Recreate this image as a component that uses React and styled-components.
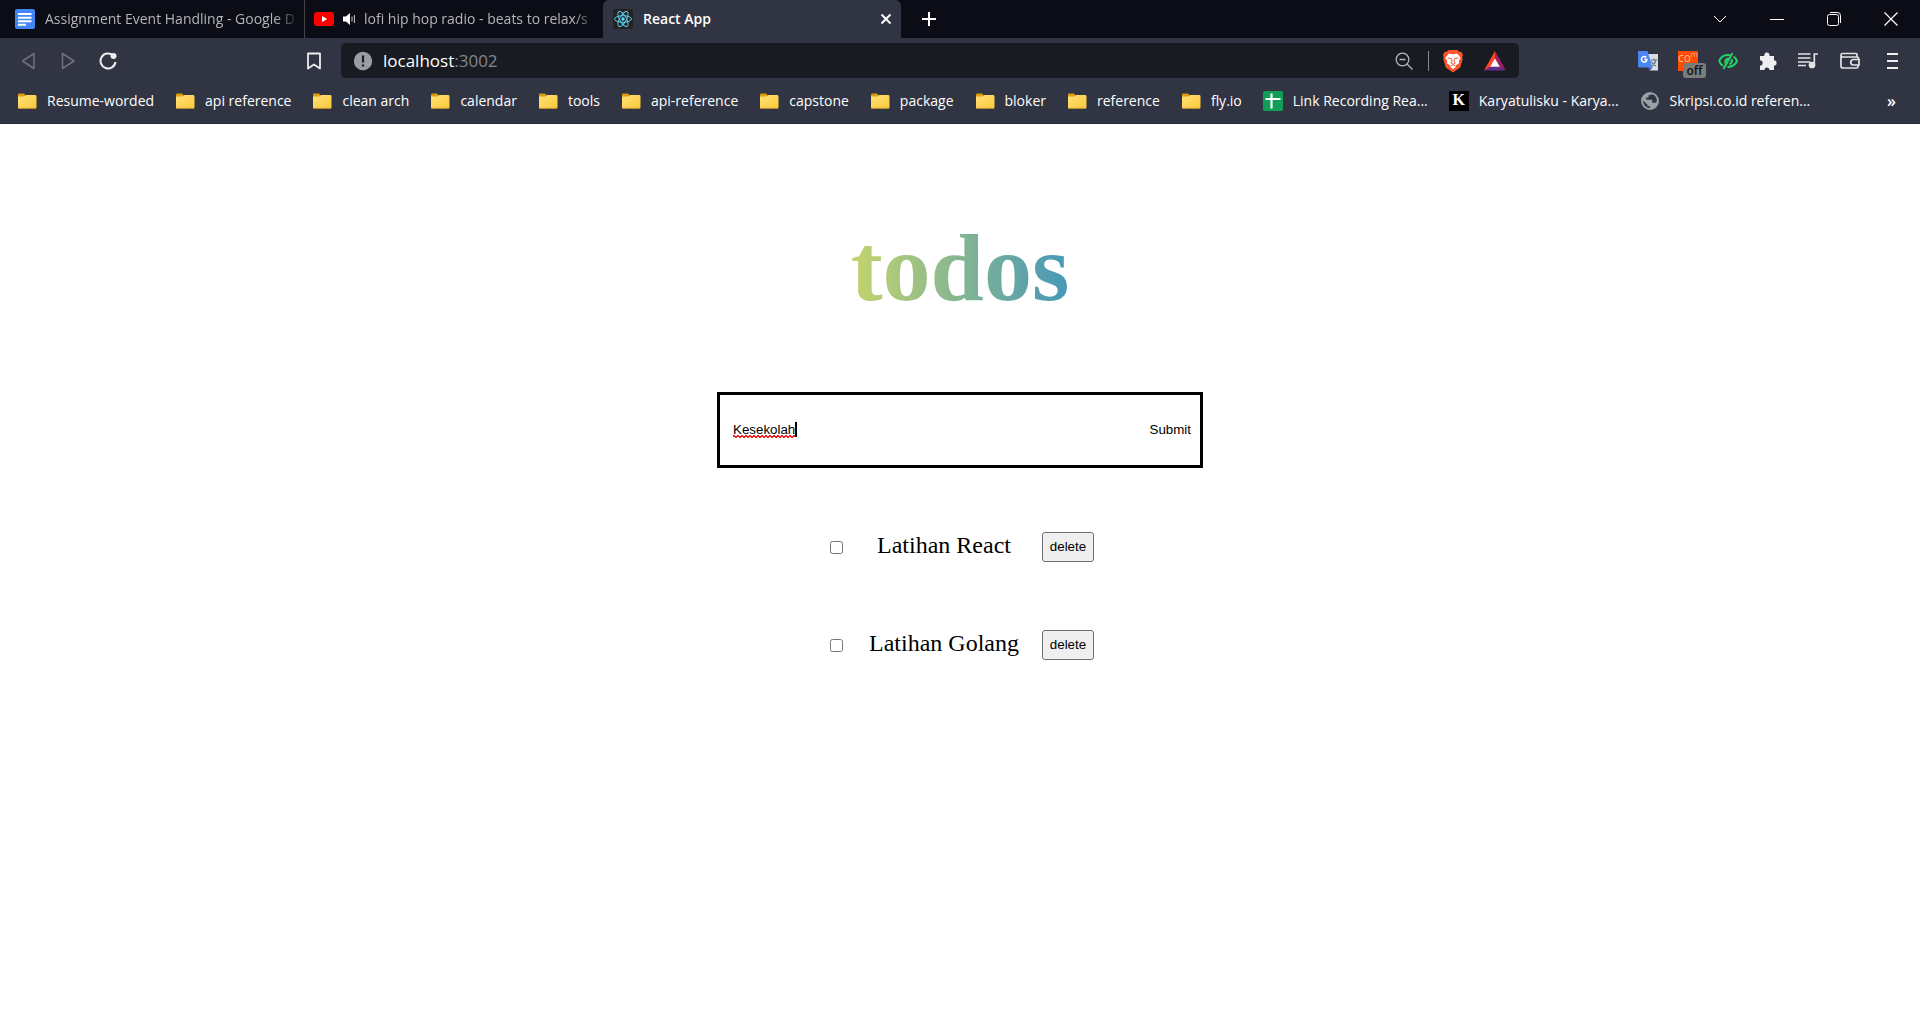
import React, { useState } from "react";
import styled, { createGlobalStyle, css } from "styled-components";

const colors = {
  strip: "#0b0c15",
  chrome: "#313442",
  address: "#181b22",
};

const GlobalStyle = createGlobalStyle`
  *, *::before, *::after { box-sizing: border-box; }
  body { margin: 0; background: #fff; }
`;

const Browser = styled.div`
  font-family: "Open Sans", "Noto Sans", sans-serif;
  background: ${colors.chrome};
  color: #fff;
`;

const IconButton = styled.button`
  display: inline-flex;
  align-items: center;
  justify-content: center;
  flex: none;
  width: ${(p) => p.$width || 40}px;
  height: 35px;
  padding: 0;
  border: 0;
  background: none;
  color: ${(p) => p.$color || "#fff"};
`;

const TabStrip = styled.div`
  display: flex;
  align-items: center;
  height: 38px;
  background: ${colors.strip};
`;

const Tab = styled.div`
  display: flex;
  align-items: center;
  gap: 9px;
  flex: 0 1 298px;
  min-width: 0;
  height: 38px;
  padding: 0 5px 0 9px;
  color: #b4b5b9;
  ${(p) =>
    p.$first &&
    css`
      gap: 10px;
      flex-basis: 305px;
      padding-left: 15px;
      border-right: 1px solid #45454a;
    `}
  ${(p) =>
    p.$active &&
    css`
      gap: 10px;
      padding-left: 10px;
      padding-right: 0;
      background: ${colors.chrome};
      color: #fff;
      font-weight: 600;
      border-radius: 6px 6px 0 0;
    `}
`;

const TabTitle = styled.span`
  flex: 1;
  min-width: 0;
  overflow: hidden;
  white-space: nowrap;
  font-size: 14px;
  line-height: 24px;
  ${(p) =>
    p.$fade &&
    css`
      mask-image: linear-gradient(to right, #000 calc(100% - 24px), transparent);
    `}
`;

const WindowControls = styled.div`
  display: flex;
  margin-left: auto;
`;

const Toolbar = styled.div`
  display: flex;
  align-items: center;
  height: 45px;
  padding-left: 8px;
  padding-right: 8px;
`;

const BookmarkSlot = styled.div`
  display: flex;
  margin-left: 166px;
  margin-right: 7px;
`;

const AddressBar = styled.div`
  display: flex;
  align-items: center;
  flex: 1;
  height: 35px;
  padding-left: 12px;
  padding-right: 2px;
  border-radius: 5px;
  background: ${colors.address};
`;

const Url = styled.div`
  flex: 1;
  margin-left: 10px;
  font-size: 17px;
  line-height: 24px;
`;

const Port = styled.span`
  color: #85878c;
`;

const Divider = styled.span`
  width: 1px;
  height: 20px;
  margin: 0 4px;
  background: #85878c;
`;

const Extensions = styled.div`
  display: flex;
  align-items: center;
  margin-left: 109px;
`;

const BookmarksBar = styled.nav`
  display: flex;
  align-items: center;
  gap: 21px;
  height: 41px;
  padding: 0 18px 5px 17px;
  border-bottom: 1px solid #292b36;
`;

const Bookmark = styled.a`
  display: flex;
  align-items: center;
  gap: 10px;
  flex: none;
  color: #fff;
  text-decoration: none;
  font-size: 14px;
  line-height: 24px;
`;

const More = styled.button`
  margin-left: auto;
  padding: 0 6px;
  border: 0;
  background: none;
  color: #fff;
  font: 600 16px/24px "Open Sans", sans-serif;
`;

const Page = styled.main`
  display: flex;
  flex-direction: column;
  align-items: center;
  padding: 89px 16px;
  background: #fff;
  color: #000;
`;

const Title = styled.h1`
  margin: 0;
  font: bold 96px/110px "Liberation Serif", "Times New Roman", serif;
  background: linear-gradient(to right, #c4d46c, #4697b8);
  background-clip: text;
  -webkit-background-clip: text;
  color: transparent;
`;

const Form = styled.form`
  display: flex;
  align-items: center;
  width: 100%;
  max-width: 486px;
  height: 76px;
  margin-top: 69px;
  padding: 0 9px 2px 13px;
  border: 3px solid #000;
`;

const Field = styled.div`
  display: flex;
  align-items: center;
  flex: 1;
  min-width: 0;
`;

const TextInput = styled.input`
  field-sizing: content;
  padding: 1px 0;
  border: 0;
  outline: 0;
  font-family: "Liberation Sans", Arial, sans-serif;
  color: #000;
  background:
    linear-gradient(45deg, transparent 40%, #e22 40% 62%, transparent 62%) 0 100% / 4px 3px repeat-x,
    linear-gradient(-45deg, transparent 40%, #e22 40% 62%, transparent 62%) 2px 100% / 4px 3px repeat-x;
`;

const Caret = styled.span`
  width: 2px;
  height: 15px;
  background: #000;
`;

const Submit = styled.button`
  padding: 0;
  border: 0;
  background: none;
  color: #000;
  font-family: "Liberation Sans", Arial, sans-serif;
`;

const TodoList = styled.ul`
  display: grid;
  gap: 68px;
  margin: 64px 0 0;
  padding: 0 0 0 4px;
  list-style: none;
`;

const TodoItem = styled.li`
  display: grid;
  grid-template-columns: 13px 199px 52px;
  align-items: center;
  height: 30px;
`;

const Check = styled.input`
  width: 13px;
  height: 13px;
  margin: 0;
`;

const TodoLabel = styled.label`
  padding-left: 3px;
  padding-bottom: 3px;
  text-align: center;
  font: 24px/27px "Liberation Serif", "Times New Roman", serif;
`;

const Delete = styled.button`
  height: 30px;
  padding: 0 0 1px;
  border: 1px solid #6f6f6f;
  border-radius: 3px;
  background: #efefef;
  color: #000;
  font-family: "Liberation Sans", Arial, sans-serif;
`;

const Stroke = ({ size = 18, box = "0 0 18 18", width = 1.5, children }) => (
  <svg width={size} height={size} viewBox={box} fill="none" stroke="currentColor" strokeWidth={width} aria-hidden="true">
    {children}
  </svg>
);

const DocsIcon = () => (
  <svg width="20" height="20" viewBox="0 0 20 20" aria-hidden="true">
    <rect width="20" height="20" rx="2" fill="#4285f4" />
    <path d="M3 5h13.500M3 8.700h13.500M3 12.200h13.500M3 15.700h8" stroke="#fff" strokeWidth="1.900" />
  </svg>
);

const YoutubeIcon = () => (
  <svg width="20" height="20" viewBox="0 0 20 20" aria-hidden="true">
    <rect y="3" width="20" height="14" rx="3" fill="#f00" />
    <path d="M8 7l5.200 3L8 13z" fill="#fff" />
  </svg>
);

const SpeakerIcon = () => (
  <svg width="12" height="14" viewBox="0 0 12 14" aria-hidden="true">
    <path d="M0 4.500h3L7 1v12L3 9.500H0z" fill="#fff" />
    <path d="M9 4.500v5M11.400 3v8" stroke="#ccc" strokeWidth="1" />
  </svg>
);

const ReactIcon = () => (
  <svg width="20" height="20" viewBox="0 0 20 20" aria-hidden="true">
    <rect width="20" height="20" rx="2" fill="#222" />
    <g fill="none" stroke="#61dafb" strokeWidth="0.900">
      <ellipse cx="10" cy="10" rx="8.500" ry="3.300" />
      <ellipse cx="10" cy="10" rx="8.500" ry="3.300" transform="rotate(60 10 10)" />
      <ellipse cx="10" cy="10" rx="8.500" ry="3.300" transform="rotate(120 10 10)" />
    </g>
    <circle cx="10" cy="10" r="1.700" fill="#61dafb" />
  </svg>
);

const FolderIcon = () => (
  <svg width="20" height="16" viewBox="0 0 20 16" aria-hidden="true">
    <defs>
      <linearGradient id="folder" x1="0" y1="0" x2="1" y2="1">
        <stop offset="0" stopColor="#ffe07a" />
        <stop offset="1" stopColor="#fac936" />
      </linearGradient>
    </defs>
    <path d="M1 1.500Q1 .5 2 .5h5l1.500 1.500v3H1z" fill="#dc9c0c" />
    <path d="M1 3.500h6.500L9 2h9q1.500 0 1.500 1.300v11q0 1.200-1 1.200H2q-1 0-1-1z" fill="url(#folder)" />
    <path d="M1.300 15.300h17.700" stroke="#c99a30" strokeWidth=".8" />
  </svg>
);

const SheetIcon = () => (
  <svg width="20" height="20" viewBox="0 0 20 20" aria-hidden="true">
    <rect width="20" height="20" rx="1.500" fill="#0f9d58" />
    <path d="M2.500 8h15M8.500 2.500v15" stroke="#fff" strokeWidth="2.200" />
  </svg>
);

const LetterTile = styled.span`
  width: 20px;
  height: 20px;
  background: #000;
  color: #fff;
  text-align: center;
  font: bold 16px/18px "Liberation Serif", serif;
`;

const GlobeIcon = () => (
  <svg width="20" height="20" viewBox="0 0 20 20" aria-hidden="true">
    <circle cx="10" cy="10" r="9" fill="#9aa0a6" />
    <path d="M12 3.200Q10.500 4 8.500 4.200V6.500H6.200v2.300h6v3h3.300l1.300-1.300A7 7 0 0 0 12 3.200zM3 9.500l4.500 4.200v1.500h2.500v2A7.200 7.200 0 0 1 3 9.500z" fill="#313442" />
  </svg>
);

const BraveIcon = () => (
  <svg width="22" height="24" viewBox="0 0 22 24" aria-hidden="true">
    <path d="M6.500 1h9l2 2 1.800-.2L21 6l-.7 2 .4 2-2.500 8.500L11 23.500 3.800 18.500 1.300 10l.4-2L1 6l1.700-3.200 1.800.2z" fill="#fb542b" />
    <path d="M7 4.500l4 .8 4-.8 3.700 4.200-1.900 3.300.3 2.200-3.300 2.300v1.500L11 20l-2.800-2v-1.500L4.900 14.200l.3-2.200-1.900-3.300z" fill="#fff" />
    <path d="M5.500 9l3.800.5M16.500 9l-3.800.5M9.500 9.500l.5 3-1.200 1.500L11 15.300l2.200-1.300-1.200-1.500.5-3M8.500 17.200l2.500-1.600 2.500 1.600" stroke="#fb542b" fill="none" strokeWidth="1" />
  </svg>
);

const BatIcon = () => (
  <svg width="22" height="20" viewBox="0 0 22 20" aria-hidden="true">
    <path d="M11 0L0 19.500 7 15.500 11 8z" fill="#ff4724" />
    <path d="M11 0l11 19.500-7-4L11 8z" fill="#9e1f63" />
    <path d="M0 19.500h22l-7-4H7z" fill="#662d91" />
    <path d="M11 7.500l4.800 8.300H6.200z" fill="#fff" />
  </svg>
);

const TranslateIcon = () => (
  <svg width="20" height="20" viewBox="0 0 20 20" aria-hidden="true">
    <path d="M8 3h12v16.500h-8z" fill="#d9dde3" />
    <path d="M12.500 9h7M16 7.500V9M18 9q-1 4-4 6M13.500 10.500q1.500 3 4.500 4.500" stroke="#607988" fill="none" strokeWidth="1.200" />
    <path d="M0 0h9.500l5 16.500H1.200Q0 16.500 0 15z" fill="#4a86f0" />
    <path d="M10 16.500h4.500L11.500 20z" fill="#3657c9" />
    <path d="M8.300 6.500A2.800 2.800 0 1 0 9 8.500H6.300" stroke="#fff" fill="none" strokeWidth="1.400" />
  </svg>
);

const ComTile = styled.span`
  position: relative;
  width: 20px;
  height: 20px;
  background: #ff4b00;
  color: #ffb894;
  text-align: left;
  font: 12px/14px "Open Sans", sans-serif;
`;

const ComSup = styled.span`
  position: absolute;
  top: 0;
  right: 0;
  font-size: 8px;
  line-height: 6px;
`;

const OffBadge = styled.span`
  position: absolute;
  left: 5px;
  top: 12px;
  width: 23px;
  height: 15px;
  border-radius: 3px;
  background: #7b7b7b;
  color: #111;
  text-align: center;
  font: 600 12px/15px "Open Sans", sans-serif;
`;

const EyeIcon = () => (
  <svg width="20" height="18" viewBox="0 0 20 18" fill="none" stroke="#25d366" strokeWidth="2" aria-hidden="true">
    <path d="M12 3.200Q4 2 1.200 9q1.300 3.500 4 5M15.500 4.500Q18 6 19 9q-2.500 6-9.500 6" />
    <path d="M14.500 1L5.500 17" />
    <path d="M10.500 6Q6 6 7 11.500z" fill="#25d366" strokeWidth="1" />
    <path d="M13.800 7Q14.500 10.500 11.500 12.500" />
  </svg>
);

const PuzzleIcon = () => (
  <svg width="20" height="20" viewBox="0 0 20 20" aria-hidden="true">
    <path d="M2 5h4.300a2.700 2.700 0 1 1 5.200 0H16v4.300a2.600 2.600 0 1 1 0 5.200V19h-4.500a2.500 2.500 0 0 0-5 0H2v-4.500a2.600 2.600 0 0 0 0-5.200z" fill="#eee" />
  </svg>
);

const PlaylistIcon = () => (
  <Stroke size={20} box="0 0 20 20" width={1.7}>
    <path d="M0 3h12.500M0 7h12.500M0 11h12.500M0 14.500h8M20 3h-3.700v11" />
    <circle cx="14" cy="14" r="2.500" fill="currentColor" />
  </Stroke>
);

const WalletIcon = () => (
  <Stroke size={20} box="0 0 20 20" width={1.7}>
    <path d="M17 6V3.500q0-1-1-1H2.500Q1 2.500 1 4v11q0 2 2 2h13.500q1.500 0 1.500-1.500V14M1 4.500Q1 6 3 6h14q1.500 0 1.500 1.500V9" />
    <path d="M19 8.500h-5.500a2.700 2.700 0 0 0 0 5.500H19z" />
  </Stroke>
);

const bookmarks = [
  "Resume-worded", "api reference", "clean arch", "calendar", "tools", "api-reference",
  "capstone", "package", "bloker", "reference", "fly.io",
].map((label) => ({ label, icon: <FolderIcon /> })).concat([
  { label: "Link Recording Rea...", icon: <SheetIcon /> },
  { label: "Karyatulisku - Karya...", icon: <LetterTile>K</LetterTile> },
  { label: "Skripsi.co.id referen...", icon: <GlobeIcon /> },
]);

const todos = ["Latihan React", "Latihan Golang"];

export default function App() {
  const [text, setText] = useState("Kesekolah");
  return (
    <>
      <GlobalStyle />
      <Browser>
        <TabStrip>
          <Tab $first>
            <DocsIcon />
            <TabTitle $fade>Assignment Event Handling - Google D</TabTitle>
          </Tab>
          <Tab>
            <YoutubeIcon />
            <SpeakerIcon />
            <TabTitle $fade>lofi hip hop radio - beats to relax/s</TabTitle>
          </Tab>
          <Tab $active>
            <ReactIcon />
            <TabTitle>React App</TabTitle>
            <IconButton $width={30} aria-label="Close tab">
              <Stroke size={12} box="0 0 12 12" width={2}><path d="M1.500 1.500l9 9M10.500 1.500l-9 9" /></Stroke>
            </IconButton>
          </Tab>
          <IconButton $width={56} aria-label="New tab">
            <Stroke size={16} box="0 0 16 16" width={2}><path d="M8 1v14M1 8h14" /></Stroke>
          </IconButton>
          <WindowControls>
            <IconButton $width={57} aria-label="Search tabs">
              <Stroke size={14} box="0 0 14 14" width={1}><path d="M1 4l6 6 6-6" /></Stroke>
            </IconButton>
            <IconButton $width={57} aria-label="Minimize">
              <Stroke size={14} box="0 0 14 14" width={1}><path d="M0 7.500h14" /></Stroke>
            </IconButton>
            <IconButton $width={57} aria-label="Restore">
              <Stroke size={14} box="0 0 14 14" width={1}>
                <rect x=".5" y="2.500" width="11" height="11" rx="2" />
                <path d="M3 .5h7.500q3 0 3 3V11" />
              </Stroke>
            </IconButton>
            <IconButton $width={58} aria-label="Close">
              <Stroke size={14} box="0 0 14 14" width={1.2}><path d="M.5.5l13 13M13.500.5l-13 13" /></Stroke>
            </IconButton>
          </WindowControls>
        </TabStrip>
        <Toolbar>
          <IconButton $color="#6f727d" aria-label="Back">
            <Stroke><path d="M15 1.500v15L3.500 9z" strokeLinejoin="round" /></Stroke>
          </IconButton>
          <IconButton $color="#6f727d" aria-label="Forward">
            <Stroke><path d="M3.500 1.500v15L15 9z" strokeLinejoin="round" /></Stroke>
          </IconButton>
          <IconButton $color="#eee" aria-label="Reload">
            <Stroke width={2}>
              <path d="M14 3.300A7.500 7.500 0 1 0 16.500 10" />
              <circle cx="14.500" cy="4" r="2" fill="currentColor" />
            </Stroke>
          </IconButton>
          <BookmarkSlot>
            <IconButton $color="#eee" aria-label="Bookmark this page">
              <Stroke width={1.8}><path d="M3 1.500h12v15l-6-4-6 4z" strokeLinejoin="round" /></Stroke>
            </IconButton>
          </BookmarkSlot>
          <AddressBar>
            <svg width="20" height="20" viewBox="0 0 20 20" aria-hidden="true">
              <circle cx="10" cy="10" r="9.200" fill="#9b9da5" />
              <path d="M10 4.500v7M10 13.500v2" stroke={colors.address} strokeWidth="2.200" />
            </svg>
            <Url>localhost<Port>:3002</Port></Url>
            <IconButton $color="#b5b7bb" aria-label="Zoom">
              <Stroke width={1.3}>
                <circle cx="7.500" cy="7.500" r="6.300" />
                <path d="M12 12l5.500 5.500M4.500 7.500h6" />
              </Stroke>
            </IconButton>
            <Divider />
            <IconButton aria-label="Brave Shields"><BraveIcon /></IconButton>
            <IconButton $width={44} aria-label="Rewards"><BatIcon /></IconButton>
          </AddressBar>
          <Extensions>
            <IconButton aria-label="Translate"><TranslateIcon /></IconButton>
            <IconButton aria-label="Extension, off">
              <ComTile>co<ComSup>m</ComSup><OffBadge>off</OffBadge></ComTile>
            </IconButton>
            <IconButton aria-label="Hide"><EyeIcon /></IconButton>
            <IconButton aria-label="Extensions"><PuzzleIcon /></IconButton>
            <IconButton $color="#e3e4e6" aria-label="Playlist"><PlaylistIcon /></IconButton>
            <IconButton $width={44} $color="#e3e4e6" aria-label="Wallet"><WalletIcon /></IconButton>
            <IconButton $color="#eee" aria-label="Menu">
              <Stroke size={16} box="0 0 16 16" width={1.8}><path d="M3 1h11M3 8h11M3 15h11" /></Stroke>
            </IconButton>
          </Extensions>
        </Toolbar>
        <BookmarksBar>
          {bookmarks.map((b) => (
            <Bookmark href="#" key={b.label}>{b.icon}{b.label}</Bookmark>
          ))}
          <More aria-label="More bookmarks">»</More>
        </BookmarksBar>
      </Browser>
      <Page>
        <Title>todos</Title>
        <Form onSubmit={(e) => e.preventDefault()}>
          <Field>
            <TextInput aria-label="New todo" value={text} onChange={(e) => setText(e.target.value)} />
            <Caret />
          </Field>
          <Submit type="submit">Submit</Submit>
        </Form>
        <TodoList>
          {todos.map((todo, i) => (
            <TodoItem key={todo}>
              <Check type="checkbox" id={`todo-${i}`} />
              <TodoLabel htmlFor={`todo-${i}`}>{todo}</TodoLabel>
              <Delete type="button">delete</Delete>
            </TodoItem>
          ))}
        </TodoList>
      </Page>
    </>
  );
}
